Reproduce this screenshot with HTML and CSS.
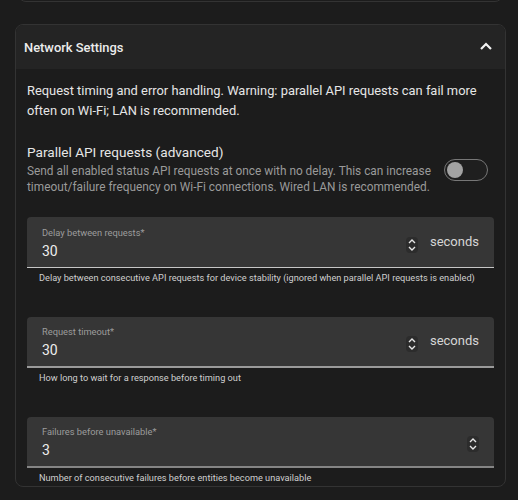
FILE: index.html
```html
<!DOCTYPE html>
<html>
<head>
<meta charset="utf-8">
<link rel="stylesheet" href="styles.css">
</head>
<body>
<div class="prev-card"></div>
<section class="card">
  <header class="card-header">
    <span class="card-title">Network Settings</span>
    <svg class="chevron" width="14" height="10" viewBox="0 0 14 10"><path d="M2 8 L7 3 L12 8" fill="none" stroke="#f2f2f2" stroke-width="2.2"/></svg>
  </header>
  <div class="card-body">
    <p class="intro">Request timing and error handling. Warning: parallel API requests can fail more often on Wi-Fi; LAN is recommended.</p>
    <div class="toggle-row">
      <div class="toggle-text">
        <div class="toggle-title">Parallel API requests (advanced)</div>
        <div class="toggle-desc">Send all enabled status API requests at once with no delay. This can increase timeout/failure frequency on Wi-Fi connections. Wired LAN is recommended.</div>
      </div>
      <div class="switch"><span class="thumb"></span></div>
    </div>

    <div class="field-group first">
      <div class="field field-a">
        <div class="field-main">
          <div class="field-label">Delay between requests*</div>
          <div class="field-value">30</div>
        </div>
        <span class="spinner"><svg width="12" height="16" viewBox="0 0 12 16"><path d="M3 6 L6 3 L9 6 M3 10 L6 13 L9 10" fill="none" stroke="#e6e6e6" stroke-width="1.4"/></svg></span>
        <span class="suffix">seconds</span>
      </div>
      <div class="helper">Delay between consecutive API requests for device stability (ignored when parallel API requests is enabled)</div>
    </div>

    <div class="field-group">
      <div class="field field-b">
        <div class="field-main">
          <div class="field-label">Request timeout*</div>
          <div class="field-value">30</div>
        </div>
        <span class="spinner"><svg width="12" height="16" viewBox="0 0 12 16"><path d="M3 6 L6 3 L9 6 M3 10 L6 13 L9 10" fill="none" stroke="#e6e6e6" stroke-width="1.4"/></svg></span>
        <span class="suffix">seconds</span>
      </div>
      <div class="helper">How long to wait for a response before timing out</div>
    </div>

    <div class="field-group">
      <div class="field field-c">
        <div class="field-main">
          <div class="field-label">Failures before unavailable*</div>
          <div class="field-value">3</div>
        </div>
        <span class="spinner"><svg width="12" height="16" viewBox="0 0 12 16"><path d="M3 6 L6 3 L9 6 M3 10 L6 13 L9 10" fill="none" stroke="#e6e6e6" stroke-width="1.4"/></svg></span>
      </div>
      <div class="helper">Number of consecutive failures before entities become unavailable</div>
    </div>
  </div>
</section>
</body>
</html>
```
FILE: styles.css
```css
html, body {
  margin: 0;
  padding: 0;
  background: #1c1c1c;
  font-family: Roboto, "Noto Sans", sans-serif;
  color: #e3e3e3;
  overflow: hidden;
  height: 500px;
}

.prev-card {
  margin: -20px 15px 0 18px;
  height: 20px;
  border: 1px solid #333;
  border-radius: 8px;
}

.card {
  margin: 22px 12px 0 15px;
  border: 1px solid #333;
  border-radius: 8px;
  background: #1c1c1c;
  overflow: hidden;
}

.card-header {
  height: 44px;
  background: #242424;
  display: flex;
  align-items: center;
  justify-content: space-between;
  padding: 0 12px 0 8px;
}

.card-title {
  font-size: 12.9px;
  font-weight: 500;
  color: #ececec;
}

.chevron {
  display: block;
  margin-top: -2px;
}

.card-body {
  padding: 12px 11px 0 11px;
}

.intro {
  margin: 0;
  font-size: 12.9px;
  line-height: 20px;
  color: #e6e6e6;
}

.toggle-row {
  display: flex;
  align-items: center;
  margin-top: 21px;
}

.toggle-text {
  flex: 1;
}

.toggle-title {
  font-size: 13.6px;
  line-height: 20px;
  color: #e6e6e6;
}

.toggle-desc {
  margin-top: 1px;
  font-size: 11.85px;
  line-height: 16px;
  color: #9a9a9a;
}

.switch {
  width: 42px;
  height: 20px;
  border: 1px solid #777;
  border-radius: 12px;
  background: #1f1f1f;
  margin: 2px 6px 0 12px;
  position: relative;
  flex: none;
}

.thumb {
  position: absolute;
  left: 2px;
  top: 2px;
  width: 16px;
  height: 16px;
  border-radius: 50%;
  background: #a3a3a3;
}

.field-group {
  margin-top: 31px;
}

.field-group.first {
  margin-top: 22px;
}

.field {
  height: 51px;
  box-sizing: border-box;
  background: #363636;
  border-radius: 4px 4px 0 0;
  display: flex;
  align-items: center;
  padding: 0 15px;
}

.field-a { border-bottom: 1px solid #c6c6c6; }
.field-b { border-bottom: 2px solid #9a9a9a; }
.field-c { border-bottom: 2px solid #858585; }

.field-main {
  flex: 1;
  padding-top: 2px;
}

.field-label {
  font-size: 9.3px;
  line-height: 14px;
  color: #9c9c9c;
}

.field-value {
  font-size: 14px;
  line-height: 20px;
  color: #ededed;
  margin-top: 1px;
}

.spinner {
  display: flex;
  align-items: center;
  justify-content: center;
  width: 12px;
  height: 16px;
  border-radius: 4px;
  background: #2c2c2c;
  margin-top: 5px;
}

.spinner svg { display: block; }

.suffix {
  margin-left: 12px;
  font-size: 13px;
  color: #d6d6d6;
  margin-top: -2px;
}

.helper {
  padding: 2px 0 0 12px;
  font-size: 9.2px;
  line-height: 16px;
  color: #cfcfcf;
}
```
